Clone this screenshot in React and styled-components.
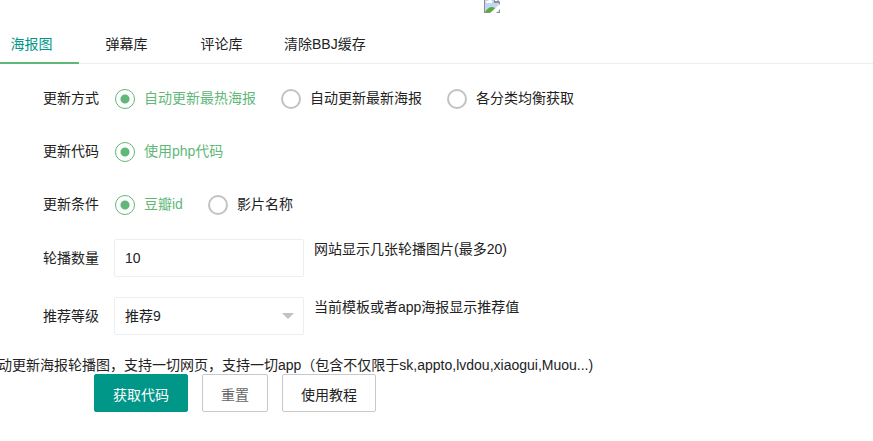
import React, { useState } from "react";
import styled, { createGlobalStyle } from "styled-components";

const tabs = ["海报图", "弹幕库", "评论库", "清除BBJ缓存"];

const radioRows = [
  {
    name: "mode",
    label: "更新方式",
    options: ["自动更新最热海报", "自动更新最新海报", "各分类均衡获取"],
  },
  { name: "code", label: "更新代码", options: ["使用php代码"] },
  { name: "condition", label: "更新条件", options: ["豆瓣id", "影片名称"] },
];

function BrokenImage() {
  return (
    <svg width="16" height="16" viewBox="0 0 16 16" role="img" aria-label="logo">
      <path d="M0 0H11L16 5V16H0Z" fill="#8f8f8f" />
      <path d="M1 1H10V6H15V15H1Z" fill="#c3d5f5" />
      <path d="M11 1V4H14Z" fill="#fff" />
      <path d="M2 6V5L3 4H4L5 3H7L8 4V6Z" fill="#fff" />
      <path d="M1 15C3 12 5 10 8 10C10 10 11 11 12 12L9 15Z" fill="#56ad38" />
      <path d="M16 7L6 16H12L16 12Z" fill="#fff" />
    </svg>
  );
}

function RadioRow({ name, label, options }) {
  const [value, setValue] = useState(options[0]);

  return (
    <RadioFieldset>
      <RowLabel as="legend">{label}</RowLabel>
      <Options>
        {options.map((item) => (
          <Option key={item} $checked={item === value}>
            <input
              type="radio"
              name={name}
              value={item}
              checked={item === value}
              onChange={() => setValue(item)}
            />
            {item}
          </Option>
        ))}
      </Options>
    </RadioFieldset>
  );
}

function App() {
  const [active, setActive] = useState(tabs[0]);
  const [count, setCount] = useState("10");
  const [level, setLevel] = useState("9");

  const handleReset = () => {
    setCount("10");
    setLevel("9");
  };

  return (
    <Page>
      <GlobalStyle />
      <Banner>
        <BrokenImage />
      </Banner>
      <TabBar>
        {tabs.map((tab) => (
          <Tab
            key={tab}
            type="button"
            $active={tab === active}
            onClick={() => setActive(tab)}
          >
            {tab}
          </Tab>
        ))}
      </TabBar>
      <Form onSubmit={(e) => e.preventDefault()}>
        <RowGroup $gap="15px">
          {radioRows.map((row) => (
            <RadioRow key={row.name} {...row} />
          ))}
        </RowGroup>
        <RowGroup $gap="20px">
          <Row>
            <RowLabel htmlFor="count">轮播数量</RowLabel>
            <TextInput
              id="count"
              value={count}
              onChange={(e) => setCount(e.target.value)}
            />
            <Hint>网站显示几张轮播图片(最多20)</Hint>
          </Row>
          <Row>
            <RowLabel htmlFor="level">推荐等级</RowLabel>
            <SelectBox>
              <Select
                id="level"
                value={level}
                onChange={(e) => setLevel(e.target.value)}
              >
                {[1, 2, 3, 4, 5, 6, 7, 8, 9].map((n) => (
                  <option key={n} value={n}>
                    推荐{n}
                  </option>
                ))}
              </Select>
            </SelectBox>
            <Hint>当前模板或者app海报显示推荐值</Hint>
          </Row>
        </RowGroup>
        <Note>
          动更新海报轮播图，支持一切网页，支持一切app（包含不仅限于sk,appto,lvdou,xiaogui,Muou...)
        </Note>
        <Buttons>
          <PrimaryButton type="submit">获取代码</PrimaryButton>
          <ResetButton type="button" onClick={handleReset}>
            重置
          </ResetButton>
          <Button type="button">使用教程</Button>
        </Buttons>
      </Form>
    </Page>
  );
}

export default App;

const GlobalStyle = createGlobalStyle`
  * {
    box-sizing: border-box;
  }
  body {
    margin: 0;
    background-color: #fff;
  }
  body, button, input, select {
    font-family: "Liberation Sans", "Noto Sans CJK SC", sans-serif;
    font-size: 14px;
    color: #222;
  }
`;

/* the left edge of the panel runs past the window */
const Page = styled.main`
  margin-left: -16px;
  overflow: hidden;
`;

const Banner = styled.header`
  display: flex;
  justify-content: center;
  height: 23px;
  padding-left: 127px;

  svg {
    margin-top: -3px;
  }
`;

const TabBar = styled.nav`
  display: flex;
  height: 41px;
  box-shadow: inset 0 -1px #eee;
`;

const Tab = styled.button`
  min-width: 95px;
  padding: 1px 15px 0;
  border: none;
  background: none;
  box-shadow: ${(p) => (p.$active ? "inset 0 -2px #5fb878" : "none")};
  line-height: 40px;
  color: ${(p) => (p.$active ? "#009688" : "#222")};
  cursor: pointer;
`;

const Form = styled.form`
  padding-top: 15px;
`;

const RowGroup = styled.div`
  display: flex;
  flex-direction: column;
  gap: ${(p) => p.$gap};
  margin-bottom: 16px;

  & + & {
    margin-bottom: 21px;
  }
`;

const Row = styled.div`
  display: flex;
  align-items: flex-start;
`;

const RadioFieldset = styled.fieldset`
  display: flex;
  height: 38px;
  margin: 0;
  padding: 0;
  border: none;

  legend {
    float: left;
  }
`;

const RowLabel = styled.label`
  width: 130px;
  padding: 9px 15px 9px 0;
  line-height: 20px;
  text-align: right;
`;

const Options = styled.div`
  display: flex;
  gap: 25px;
  padding: 6px 0 0 1px;
`;

const Option = styled.label`
  display: flex;
  align-items: flex-start;
  gap: 9px;
  height: 28px;
  padding: 4px 0;
  line-height: 18px;
  color: ${(p) => (p.$checked ? "#5fb878" : "#222")};
  cursor: pointer;

  input {
    appearance: none;
    width: 20px;
    height: 20px;
    margin: 0;
    border: 2px solid #c2c2c2;
    border-radius: 50%;
  }
  input:checked {
    border: 1px solid #5fb878;
    background: radial-gradient(circle, #5fb878 4px, transparent 5px);
  }
`;

const TextInput = styled.input`
  width: 190px;
  height: 38px;
  padding: 0 10px;
  border: 1px solid #eee;
  border-radius: 2px;
  outline: none;
`;

const SelectBox = styled.div`
  position: relative;

  &::after {
    content: "";
    position: absolute;
    top: 16px;
    right: 10px;
    border: 6px solid transparent;
    border-top-color: #c2c2c2;
    pointer-events: none;
  }
`;

const Select = styled.select`
  display: block;
  appearance: none;
  width: 190px;
  height: 38px;
  padding: 0 10px;
  border: 1px solid #eee;
  border-radius: 2px;
  background-color: #fff;
  outline: none;
`;

const Hint = styled.span`
  margin-left: 10px;
  line-height: 20px;
`;

const Note = styled.p`
  margin: 0;
  padding-left: 14px;
  line-height: 18px;
  white-space: nowrap;
`;

const Buttons = styled.div`
  display: flex;
  gap: 14px;
  padding-left: 110px;
`;

const Button = styled.button`
  height: 38px;
  padding: 1px 18px 0;
  border: 1px solid #c9c9c9;
  border-radius: 2px;
  background-color: #fff;
  cursor: pointer;
`;

const PrimaryButton = styled(Button)`
  border-color: #009688;
  background-color: #009688;
  color: #fff;
`;

const ResetButton = styled(Button)`
  color: #666;
`;
